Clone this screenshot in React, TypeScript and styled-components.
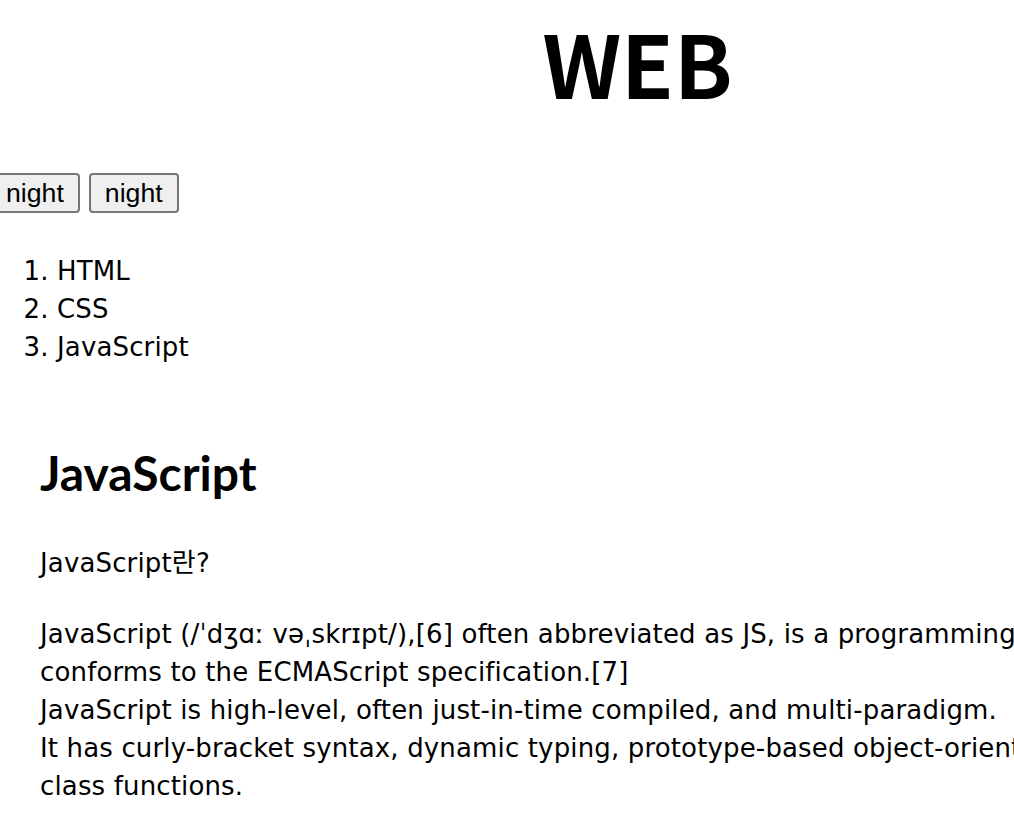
import React from "react";
import styled, { createGlobalStyle } from "styled-components";

const GlobalStyle = createGlobalStyle`
  html, body {
    margin: 0;
    padding: 0;
    overflow: hidden;
    background: #ffffff;
  }
  body {
    font-family: "DejaVu Sans", "Noto Sans CJK KR", sans-serif;
    color: #000000;
  }
`;

const Page = styled.div`
  width: 1275px;
  display: flex;
  flex-direction: column;
  align-items: flex-start;
`;

const Title = styled.h1`
  align-self: stretch;
  margin: 12px 0 0;
  font-family: "Noto Sans CJK KR", sans-serif;
  font-size: 86px;
  line-height: 100px;
  font-weight: 700;
  text-align: center;
`;

const Controls = styled.div`
  display: flex;
  gap: 9px;
  margin: 61px 0 0 -10px;
`;

const ModeButton = styled.button`
  box-sizing: border-box;
  height: 40px;
  padding: 0 14px;
  font-family: "Liberation Sans", Arial, sans-serif;
  font-size: 26.67px;
  color: #000000;
  background: #efefef;
  border: 2px solid #767676;
  border-radius: 4px;
`;

const NavList = styled.ol`
  margin: 39px 0 0;
  padding-left: 57px;
  font-size: 26px;
  line-height: 38px;
  letter-spacing: 0.15px;
`;

const Article = styled.article`
  padding-left: 40px;
  display: flex;
  flex-direction: column;
`;

const Heading = styled.h2`
  margin: 79px 0 0;
  font-family: Lato, "Noto Sans CJK KR", sans-serif;
  font-size: 48px;
  line-height: 56px;
  font-weight: 700;
`;

const Para = styled.p<{ $gap: number }>`
  margin: ${(p) => p.$gap}px 0 0;
  font-size: 26px;
  line-height: 38px;
  letter-spacing: 0.15px;
  white-space: nowrap;
`;

export default function App() {
  return (
    <>
      <GlobalStyle />
      <Page>
        <Title>WEB</Title>
        <Controls>
          <ModeButton type="button">night</ModeButton>
          <ModeButton type="button">night</ModeButton>
        </Controls>
        <NavList>
          <li>HTML</li>
          <li>CSS</li>
          <li>JavaScript</li>
        </NavList>
        <Article>
          <Heading>JavaScript</Heading>
          <Para $gap={43}>JavaScript란?</Para>
          <Para $gap={33}>
            JavaScript (/ˈdʒɑː vəˌskrɪpt/),[6] often abbreviated as JS, is a programming language that
            <br />
            conforms to the ECMAScript specification.[7]
            <br />
            JavaScript is high-level, often just-in-time compiled, and multi-paradigm.
            <br />
            It has curly-bracket syntax, dynamic typing, prototype-based object-orientation, and first-
            <br />
            class functions.
          </Para>
        </Article>
      </Page>
    </>
  );
}
